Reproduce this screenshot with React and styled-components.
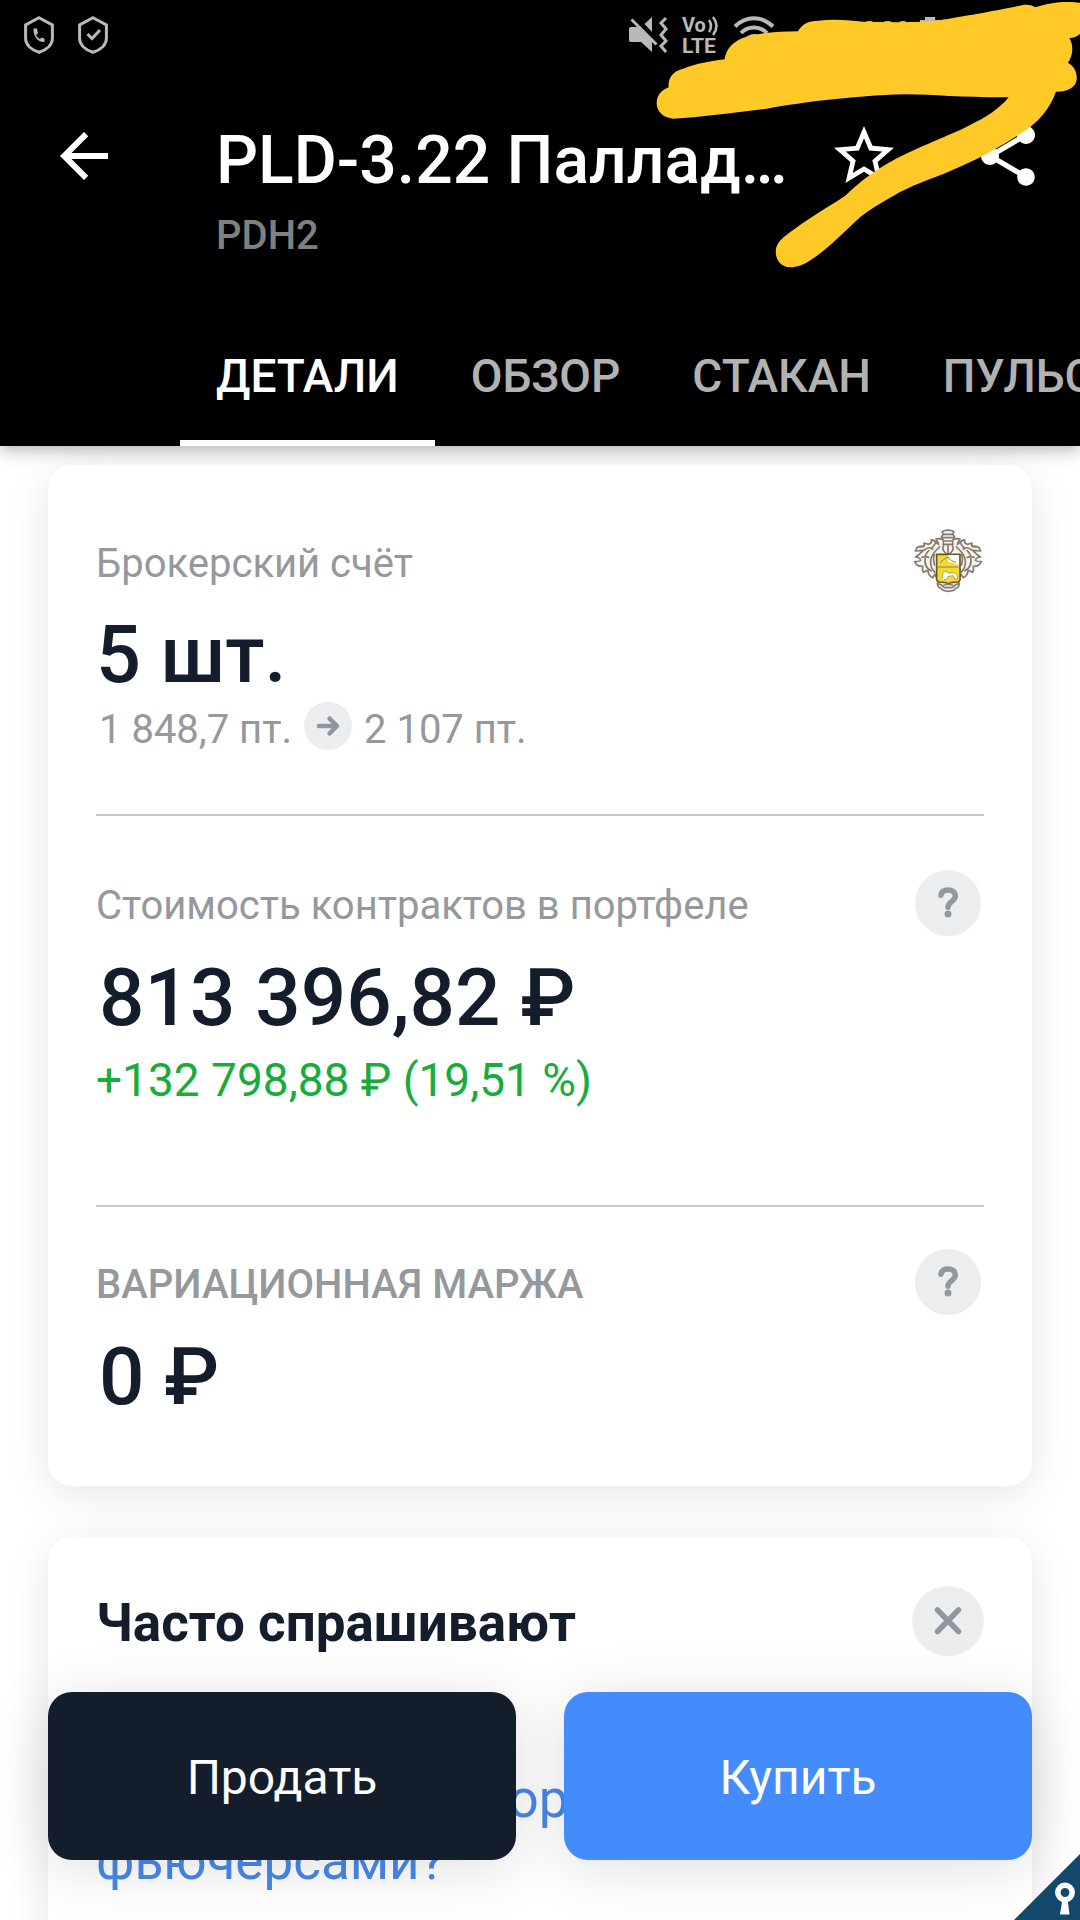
import React from 'react';
import styled, { createGlobalStyle } from 'styled-components';
import { MdArrowBack, MdStarBorder, MdShare } from 'react-icons/md';

const tabs = ['Детали', 'Обзор', 'Стакан', 'Пульс'];

const ShieldIcon = ({ children }) => (
  <svg width='30' height='38' viewBox='0 0 30 38' fill='none' stroke='#b9b9b9' strokeWidth='3'>
    <path d='M15 1.8L28.4 9v13.5c0 6-5.400 11.200-13.400 13.800C7 33.700 1.600 28.500 1.600 22.500V9z' />
    {children}
  </svg>
);

const MuteIcon = () => (
  <svg width='40' height='38' viewBox='0 0 40 38' fill='#b9b9b9'>
    <path d='M2 11h8l13 13v12l-11-10H2c-1.500 0-2-1-2-2V13c0-1 .500-2 2-2z' />
    <path d='M15.500 8L23 1v15z' />
    <path d='M2.500 3.500l25 25' fill='none' stroke='#b9b9b9' strokeWidth='3' />
    <path d='M37 2l-5 5 5 6-5 6 5 6-5 5 5 6' fill='none' stroke='#b9b9b9' strokeWidth='3' />
  </svg>
);

const LteIcon = () => (
  <svg width='38' height='38' viewBox='0 0 38 38' fill='#b9b9b9' fontFamily='Roboto, sans-serif' fontWeight='700'>
    <text x='0' y='16' fontSize='20'>Vo</text>
    <text x='0' y='37' fontSize='21'>LTE</text>
    <path d='M27 4q4 6 0 12M31 1q7 9 0 18' fill='none' stroke='#b9b9b9' strokeWidth='2.500' />
  </svg>
);

const WifiIcon = () => (
  <svg width='42' height='38' viewBox='0 0 42 38' fill='none' stroke='#b9b9b9' strokeWidth='4'>
    <path d='M2 10.500C13-.5 29-.5 40 10.500M8 17c7-7.500 19-7.500 26 0M14 23c4-4 10-4 14 0' />
  </svg>
);

const BatteryIcon = () => (
  <svg width='20' height='38' viewBox='0 0 20 38' fill='#b9b9b9'>
    <path d='M5 1h10v3h5v34H0V4h5z' />
  </svg>
);

const QuestionIcon = () => (
  <svg width='66' height='66' viewBox='0 0 66 66' fill='none' stroke='#92989f' strokeWidth='5.500' strokeLinecap='round'>
    <path d='M26 25.300c.400-3.500 3-5.400 7-5.400 4.300 0 7.300 2.500 7.300 6.200 0 5.400-7.300 5.600-7.300 11.100' />
    <circle cx='33' cy='44' r='3.500' fill='#92989f' stroke='none' />
  </svg>
);

const CloseIcon = () => (
  <svg width='72' height='70' viewBox='0 0 72 70' stroke='#92979f' strokeWidth='5.500' strokeLinecap='round'>
    <path d='M25.500 24l21 21.500M46.500 24l-21 21.500' />
  </svg>
);

const BranchHalf = () => (
  <g>
    <path d='M88 30C80 32 74 26 66 30c2 8 8 8 8 16-6-4-12-12-22-14 2 8-2 12-8 14l-14-4C34 52 26 56 12 54c-4 4-8 8-8 12l24-2c-8 8-12 14-24 20 8 0 14 4 16 10-6 4-12 4-18 4 4 12 12 14 24 14 0 8-2 12 2 18 6-2 10-6 14-6 0 12 4 18 14 22 4-4 4-8 8-10 2 12 8 20 18 24' />
    <path d='M66 38c-4 20-28 22-32 44s4 38 20 44' />
    <path d='M78 52c-10 12-26 22-28 42s6 28 14 38' />
    <path d='M58 62c-8-8-18-8-28 2M46 86c-8-4-16-4-24 0M62 74c-4 10-4 24 0 36' />
    <path d='M6 58c8-6 18-8 26-6' />
  </g>
);

const CrestIcon = () => (
  <svg width='68' height='64' viewBox='0 0 204 192' fill='#f6f2ec' stroke='#857a70' strokeWidth='5' strokeLinejoin='round'>
    <BranchHalf />
    <g transform='translate(204 0) scale(-1 1)'>
      <BranchHalf />
    </g>
    <path d='M84 8c10-6 26-6 36 0l-4 8 6 8-6 10v18c4 8-2 20-14 24-12-4-18-16-14-24V34l-6-10 6-8z' />
    <path d='M86 16h32M84 26h36M90 36h24M90 46h24M102 48v26' />
    <path d='M68 76h70v76c0 6-10 8-20 8-8 0-12 2-15 5-3-3-7-5-15-5-10 0-20-2-20-8z' fill='#f5da2e' stroke='#665a2c' strokeWidth='5' />
    <path d='M103 78h32v30c-10-2-20-10-32-8z' fill='#fff' stroke='none' />
    <path d='M72 114h62M78 102c8-8 14-14 24-18 4 8 14 14 24 16' fill='none' strokeWidth='3' />
    <path d='M84 148c4-8 0-12 4-18l8-4 6 6h18c8 0 10 8 10 18h-8l-4-10-16 2-4 10h-8' fill='#fff' strokeWidth='2' />
    <path d='M70 162l16 8c10-4 24-4 34 0l16-8c0 8-4 14-10 16-10 12-36 12-46 0-6-2-10-8-10-16z' />
    <path d='M86 170c0 8 34 8 34 0' />
  </svg>
);

const App = () => (
  <Page>
    <GlobalStyle />
    <Header>
      <StatusBar>
        <StatusGroup $gap={24}>
          <ShieldIcon>
            <path d='M9.500 12.500h3.500l1 5-2 1.500c1 2 2 3 4 4l1.500-1.500 3 1v3.500C15 27 9 21 9.500 12.500z' fill='#b9b9b9' stroke='none' />
          </ShieldIcon>
          <ShieldIcon>
            <path d='M9.500 18l4.500 4.500 8-8.500' />
          </ShieldIcon>
        </StatusGroup>
        <StatusGroup $gap={13}>
          <MuteIcon />
          <LteIcon />
          <WifiIcon />
          <StatusGroup $gap={0}>
            <Charge>100%</Charge>
            <BatteryIcon />
          </StatusGroup>
        </StatusGroup>
      </StatusBar>
      <AppBar>
        <IconButton aria-label='Назад'><MdArrowBack size={72} /></IconButton>
        <Heading>
          <h1>PLD-3.22 Палладий</h1>
          <p>PDH2</p>
        </Heading>
        <IconButton aria-label='В избранное'><MdStarBorder size={72} /></IconButton>
        <IconButton aria-label='Поделиться'><MdShare size={72} /></IconButton>
      </AppBar>
      <Tabs>
        {tabs.map((tab, i) => (
          <Tab key={tab} $active={i === 0}>{tab}</Tab>
        ))}
      </Tabs>
      <Scribble viewBox='0 0 1440 840' aria-hidden='true'>
        <path d='M170 310C170 286 184 270 206 262C203 235 218 212 250 206C290 190 330 184 374 178C376 150 400 120 440 110C480 97 540 95 594 94C604 74 625 62 655 62C700 56 750 60 800 66C880 67 960 67 1010 62C1060 54 1180 34 1268 15C1284 12 1300 17 1307 22C1340 8 1400 2 1440 8V102C1430 110 1418 115 1408 114C1421 135 1420 165 1404 188C1425 200 1432 220 1430 240C1425 265 1400 276 1368 275C1350 326 1314 366 1278 390C1220 428 1150 470 1080 500C1020 528 960 545 900 576C860 600 820 620 780 652C740 688 690 742 640 775C610 797 590 802 570 802C538 800 524 775 528 745C535 718 560 705 600 675C650 640 700 612 735 588C780 545 820 515 860 492C930 450 1040 410 1100 380C1160 352 1198 326 1226 292C1100 293 1000 284 920 283C830 284 760 293 700 298C620 306 560 316 500 326C400 338 300 352 220 356C190 354 170 335 170 310Z' />
      </Scribble>
    </Header>

    <Content>
      <Card>
        <Section $top={63} $bottom={60}>
          <Row>
            <Label>Брокерский счёт</Label>
            <Crest><CrestIcon /></Crest>
          </Row>
          <Quantity>5 шт.</Quantity>
          <Price>
            <span>1 848,7 пт.</span>
            <ArrowBadge>
              <svg width='48' height='48' viewBox='0 0 48 48' fill='none' stroke='#8f969f' strokeWidth='4.500' strokeLinecap='round' strokeLinejoin='round'>
                <path d='M15 24h17M25.500 16.500l7.500 7.500-7.500 7.500' />
              </svg>
            </ArrowBadge>
            <span>2 107 пт.</span>
          </Price>
        </Section>
        <Section $top={54} $bottom={98}>
          <Row>
            <Label>Стоимость контрактов в портфеле</Label>
            <HelpButton aria-label='Подсказка'><QuestionIcon /></HelpButton>
          </Row>
          <Amount>813 396,82 ₽</Amount>
          <Profit>+132 798,88 ₽ (19,51 %)</Profit>
        </Section>
        <Section $top={42} $bottom={61}>
          <Row>
            <Label $medium>ВАРИАЦИОННАЯ МАРЖА</Label>
            <HelpButton aria-label='Подсказка'><QuestionIcon /></HelpButton>
          </Row>
          <Amount>0 ₽</Amount>
        </Section>
      </Card>

      <Card>
        <Section $top={49} $bottom={96}>
          <Row>
            <h2>Часто спрашивают</h2>
            <CloseButton aria-label='Закрыть'><CloseIcon /></CloseButton>
          </Row>
          <Question href='#faq'>Как правильно торговать фьючерсами?</Question>
        </Section>
      </Card>
    </Content>

    <Actions>
      <ActionButton $color='#141d2b'>Продать</ActionButton>
      <ActionButton $color='#448bfb'>Купить</ActionButton>
    </Actions>

    <Corner width='66' height='66' viewBox='0 0 66 66' aria-hidden='true'>
      <path d='M66 0v66H0z' fill='#13476b' />
      <circle cx='51' cy='38.500' r='7.200' fill='none' stroke='#fff' strokeWidth='5.500' />
      <path d='M48.500 45h5l2 15.500h-9.500z' fill='#fff' />
    </Corner>
  </Page>
);

const GlobalStyle = createGlobalStyle`
  * {
    box-sizing: border-box;
    margin: 0;
  }

  body {
    font-family: Roboto, 'Liberation Sans', sans-serif;
    color: #141d2b;
    background: #fff;
  }

  button {
    padding: 0;
    border: none;
    font-family: inherit;
    cursor: pointer;
  }

  svg {
    display: block;
    flex-shrink: 0;
    overflow: visible;
  }
`;

const Page = styled.div`
  position: relative;
  display: flex;
  flex-direction: column;
  height: 100vh;
  overflow: hidden;
`;

const Header = styled.header`
  position: relative;
  z-index: 1;
  flex-shrink: 0;
  background: #000;
  color: #fff;
  box-shadow: 0 4px 16px rgba(0, 0, 0, 0.3);
`;

const StatusBar = styled.div`
  display: flex;
  justify-content: space-between;
  height: 72px;
  padding: 16px 140px 0 24px;
`;

const StatusGroup = styled.div`
  display: flex;
  align-items: flex-start;
  gap: ${({ $gap }) => $gap}px;
`;

const Charge = styled.span`
  padding-left: 54px;
  font-size: 32px;
  line-height: 32px;
  font-weight: 500;
  color: #b9b9b9;
`;

const AppBar = styled.div`
  display: flex;
  align-items: flex-start;
  padding: 48px 36px 0 48px;
`;

const IconButton = styled.button`
  flex-shrink: 0;
  background: none;
  color: #fff;

  & + & {
    margin-left: 72px;
  }
`;

const Heading = styled.div`
  flex: 1;
  min-width: 0;
  margin: 0 24px 0 96px;
  padding-top: 2px;

  h1 {
    overflow: hidden;
    font-size: 66px;
    line-height: 78px;
    font-weight: 500;
    white-space: nowrap;
    text-overflow: ellipsis;
  }

  p {
    margin-top: 12px;
    font-size: 40px;
    line-height: 48px;
    font-weight: 500;
    color: #808080;
  }
`;

const Tabs = styled.nav`
  display: flex;
  margin-top: 42px;
  padding-left: 180px;
  overflow: hidden;
`;

const Tab = styled.button`
  flex-shrink: 0;
  height: 144px;
  padding: 10px 36px 0;
  border-bottom: 6px solid ${({ $active }) => ($active ? '#fff' : 'transparent')};
  background: none;
  color: ${({ $active }) => ($active ? '#fff' : '#b2b2b2')};
  font-size: 46px;
  line-height: 54px;
  font-weight: 500;
  text-transform: uppercase;
`;

/* Marker stroke drawn over the status bar */
const Scribble = styled.svg`
  position: absolute;
  top: 0;
  right: 0;
  width: 480px;
  height: 280px;
  fill: #ffc928;
  pointer-events: none;
`;

const Content = styled.main`
  display: flex;
  flex: 1;
  flex-direction: column;
  gap: 51px;
  min-height: 0;
  padding: 19px 48px 0;
  overflow: hidden;
`;

const Card = styled.section`
  flex-shrink: 0;
  padding: 0 48px;
  border-radius: 24px;
  background: #fff;
  box-shadow: 0 8px 44px rgba(0, 0, 0, 0.1);
`;

const Section = styled.div`
  padding: ${({ $top, $bottom }) => `${$top}px 0 ${$bottom}px`};

  & + & {
    border-top: 2px solid #c8c9cb;
  }
`;

const Row = styled.div`
  display: flex;
  align-items: center;
  justify-content: space-between;
  min-height: 66px;

  h2 {
    padding-top: 4px;
    font-size: 53px;
    line-height: 64px;
    font-weight: 700;
  }
`;

const Label = styled.p`
  padding-top: 6px;
  font-size: 40px;
  line-height: 48px;
  font-weight: ${({ $medium }) => ($medium ? 500 : 400)};
  color: #95989d;
`;

const Crest = styled.div`
  margin-right: 2px;
`;

const Quantity = styled.p`
  margin-top: 14px;
  font-size: 79px;
  line-height: 94px;
  font-weight: 500;
`;

const Amount = styled.p`
  margin-top: 14px;
  padding-left: 3px;
  font-size: 80px;
  line-height: 96px;
  font-weight: 500;
`;

const Price = styled.div`
  display: flex;
  align-items: flex-start;
  gap: 12px;
  padding-left: 3px;
  font-size: 40px;
  line-height: 48px;
  color: #95989d;

  span {
    padding-top: 4px;
  }
`;

const ArrowBadge = styled.i`
  border-radius: 50%;
  background: #ebedef;
`;

const HelpButton = styled.button`
  margin-right: 3px;
  border-radius: 50%;
  background: #ebedef;
`;

const CloseButton = styled.button`
  border-radius: 50%;
  background: #ebedef;
`;

const Profit = styled.p`
  margin-top: 7px;
  font-size: 46px;
  line-height: 54px;
  color: #17ac3b;
`;

const Question = styled.a`
  display: block;
  margin-top: 112px;
  font-size: 53px;
  line-height: 62px;
  color: #4888e8;
  text-decoration: none;
`;

const Actions = styled.div`
  position: absolute;
  right: 48px;
  bottom: 60px;
  left: 48px;
  z-index: 2;
  display: flex;
  gap: 48px;
`;

const ActionButton = styled.button`
  flex: 1;
  height: 168px;
  padding-top: 4px;
  border-radius: 24px;
  background: ${({ $color }) => $color};
  color: #fff;
  font-size: 48px;
  line-height: 56px;
  box-shadow: 0 8px 60px rgba(0, 0, 0, 0.13);
`;

const Corner = styled.svg`
  position: absolute;
  right: 0;
  bottom: 0;
  z-index: 3;
`;

export default App;
